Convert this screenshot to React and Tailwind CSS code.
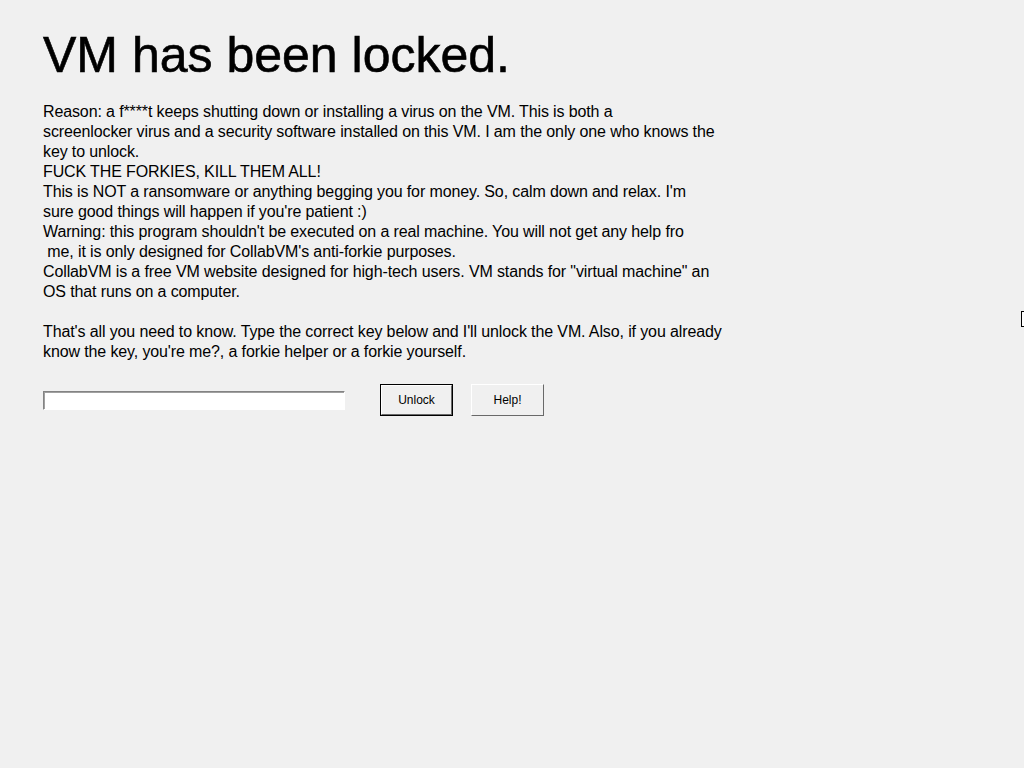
const lines = [
  "Reason: a f****t keeps shutting down or installing a virus on the VM. This is both a",
  "screenlocker virus and a security software installed on this VM. I am the only one who knows the",
  "key to unlock.",
  "FUCK THE FORKIES, KILL THEM ALL!",
  "This is NOT a ransomware or anything begging you for money. So, calm down and relax. I'm",
  "sure good things will happen if you're patient :)",
  "Warning: this program shouldn't be executed on a real machine. You will not get any help fro",
  " me, it is only designed for CollabVM's anti-forkie purposes.",
  "CollabVM is a free VM website designed for high-tech users. VM stands for \"virtual machine\" an",
  "OS that runs on a computer.",
  "",
  "That's all you need to know. Type the correct key below and I'll unlock the VM. Also, if you already",
  "know the key, you're me?, a forkie helper or a forkie yourself.",
]

const App = () => {
  return (
    <div className="relative w-[1024px] h-[768px] bg-[#f0f0f0] text-black overflow-hidden font-['Liberation_Sans',Arial,sans-serif]">
      <div className="pl-[43px] pt-[27px]">
        <h1 className="text-[50px] leading-[57px] font-normal [-webkit-text-stroke:0.6px_black]">VM has been locked.</h1>

        <div className="mt-[18px] text-[16px] leading-[20px] tracking-[-0.12px]">
          {lines.map((l, i) => (
            <div key={i} className="whitespace-pre h-[20px]">{l}</div>
          ))}
        </div>

        <div className="flex items-center mt-[22px]">
          <input
            type="text"
            className="w-[302px] h-[19px] bg-white outline-none border border-t-[#838383] border-l-[#838383] border-b-white border-r-white shadow-[inset_1px_1px_0_#a0a0a0]"
          />
          <button className="ml-[35px] w-[73px] h-[32px] border border-black bg-[#f0f0f0] text-[12px] font-['Liberation_Sans',Arial,sans-serif]">
            <div className="w-full h-full border border-t-white border-l-white border-b-[#696969] border-r-[#696969] flex items-center justify-center">
              Unlock
            </div>
          </button>
          <button className="ml-[18px] w-[73px] h-[32px] bg-[#f0f0f0] text-[12px] border border-t-white border-l-white border-b-[#696969] border-r-[#696969] flex items-center justify-center">
            Help!
          </button>
        </div>
      </div>

      <div className="absolute left-[1021px] top-[311px] w-[4px] h-[16px] border border-black bg-white" />
    </div>
  )
}

export default App
